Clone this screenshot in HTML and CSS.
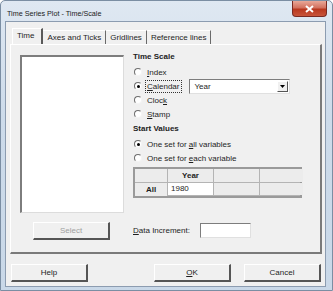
FILE: index.html
```html
<!DOCTYPE html>
<html lang="en">
<head>
    <meta charset="UTF-8">
    <title>Time Series Plot - Time/Scale</title>
    <link rel="stylesheet" href="styles.css">
</head>
<body>
    <div class="window">
        <div class="titlebar">
            <span class="title">Time Series Plot - Time/Scale</span>
            <span class="close-btn">
                <svg width="9" height="8" viewBox="0 0 9 8"><path d="M1 1 L8 7 M8 1 L1 7" stroke="#fff" stroke-width="2"/></svg>
            </span>
        </div>

        <div class="client">
            <div class="tabs">
                <div class="tab active">Time</div>
                <div class="tab">Axes and Ticks</div>
                <div class="tab">Gridlines</div>
                <div class="tab">Reference lines</div>
            </div>

            <div class="panel">
                <div class="left-col">
                    <div class="listbox"></div>
                    <div class="btn disabled select-btn">Select</div>
                </div>

                <div class="right-col">
                    <div class="group-label">Time Scale</div>
                    <div class="radio-row"><span class="radio"></span><span><u>I</u>ndex</span></div>
                    <div class="radio-row">
                        <span class="radio checked"></span>
                        <span class="focused"><u>C</u>alendar</span>
                        <div class="combo">
                            <span class="combo-text">Year</span>
                            <span class="combo-arrow">
                                <svg width="5" height="3" viewBox="0 0 5 3"><path d="M0 0 H5 L2.5 3 Z" fill="#000"/></svg>
                            </span>
                        </div>
                    </div>
                    <div class="radio-row"><span class="radio"></span><span>Cloc<u>k</u></span></div>
                    <div class="radio-row"><span class="radio"></span><span><u>S</u>tamp</span></div>

                    <div class="group-label second">Start Values</div>
                    <div class="radio-row"><span class="radio checked"></span><span>One set for <u>a</u>ll variables</span></div>
                    <div class="radio-row"><span class="radio"></span><span>One set for <u>e</u>ach variable</span></div>

                    <div class="grid">
                        <div class="cell head"></div>
                        <div class="cell head bold center">Year</div>
                        <div class="cell head"></div>
                        <div class="cell head"></div>
                        <div class="cell head bold center">All</div>
                        <div class="cell white">1980</div>
                        <div class="cell"></div>
                        <div class="cell"></div>
                    </div>

                    <div class="increment-row">
                        <span><u>D</u>ata Increment:</span>
                        <div class="textbox"></div>
                    </div>
                </div>
            </div>

            <div class="buttons">
                <div class="btn">Help</div>
                <div class="btn-pair">
                    <div class="btn"><u>O</u>K</div>
                    <div class="btn">Cancel</div>
                </div>
            </div>
        </div>
    </div>
</body>
</html>
```

FILE: styles.css
```css
* {
    margin: 0;
    padding: 0;
    box-sizing: border-box;
}

body {
    font-family: "Liberation Sans", Arial, sans-serif;
    font-size: 8px;
    color: #1e1e1e;
    background: #fff;
}

.window {
    width: 333px;
    height: 291px;
    background: linear-gradient(#dfe8f2, #cddbea 40%, #c9d8e8);
    border: 1px solid #7b8ea3;
    border-radius: 5px 5px 0 0;
    padding: 0 6px 3px 4px;
    display: flex;
    flex-direction: column;
}

.titlebar {
    height: 20px;
    display: flex;
    align-items: flex-start;
    flex-shrink: 0;
}

.title {
    font-size: 7.2px;
    margin: 8px 0 0 2px;
    color: #1a1a1a;
}

.close-btn {
    margin-left: auto;
    margin-right: -1px;
    width: 35px;
    height: 16px;
    border: 1px solid #7a2a22;
    border-top: none;
    border-radius: 0 0 4px 4px;
    background: linear-gradient(#e9a898, #d2715f 45%, #b9381f 55%, #c8553b);
    display: flex;
    align-items: center;
    justify-content: center;
}

.client {
    flex: 1;
    background: #f0f0f0;
    border: 1px solid #8c9cb0;
    display: flex;
    flex-direction: column;
}

/* tabs */
.tabs {
    display: flex;
    margin: 6px 0 0 6px;
    height: 16px;
    align-items: flex-end;
}

.tab {
    height: 14px;
    line-height: 13px;
    padding: 0 4px;
    border-right: 1px solid #6a6a6a;
    border-top: 1px solid #fff;
}

.tab.active {
    height: 16px;
    line-height: 14px;
    padding: 0 7px 0 4px;
    border-left: 1px solid #fff;
    border-right: 2px solid #5a5a5a;
    background: #f0f0f0;
}

.panel {
    margin-left: 4px;
    width: 312px;
    height: 210px;
    border-top: 1px solid #fff;
    border-left: 1px solid #fff;
    border-right: 2px solid #7a7a7a;
    border-bottom: 2px solid #7a7a7a;
    display: flex;
    padding: 10px 0 0 9px;
}

.left-col {
    width: 113px;
    display: flex;
    flex-direction: column;
}

.listbox {
    width: 104px;
    height: 158px;
    background: #fff;
    border-top: 2px solid #7d7d7d;
    border-left: 2px solid #7d7d7d;
    border-right: 1px solid #dcdcdc;
    border-bottom: 1px solid #dcdcdc;
}

.btn {
    width: 77px;
    height: 18px;
    display: flex;
    align-items: center;
    justify-content: center;
    background: #f0f0f0;
    border-top: 1px solid #fff;
    border-left: 1px solid #fff;
    border-right: 2px solid #555;
    border-bottom: 2px solid #555;
}

.btn.disabled {
    color: #a0a0a0;
}

.select-btn {
    margin: 9px 0 0 13px;
}

/* right column */
.right-col {
    display: flex;
    flex-direction: column;
}

.group-label {
    height: 14px;
    line-height: 14px;
    font-weight: bold;
    color: #222;
    margin-top: -5px;
    margin-bottom: 1px;
}

.group-label.second {
    margin-top: 1px;
}

.radio-row {
    height: 14px;
    display: flex;
    align-items: center;
}

.radio {
    width: 8px;
    height: 8px;
    border-radius: 50%;
    background: #fff;
    border: 1px solid;
    border-color: #6d6d6d #f4f4f4 #f4f4f4 #6d6d6d;
    margin: 0 5px 0 1px;
    display: flex;
    align-items: center;
    justify-content: center;
}

.radio.checked::after {
    content: '';
    width: 3px;
    height: 3px;
    border-radius: 50%;
    background: #000;
}

.focused {
    outline: 1px dotted #333;
    outline-offset: 1px;
    padding-right: 1px;
}

.combo {
    margin-left: 9px;
    width: 101px;
    height: 15px;
    background: #fff;
    border-top: 1px solid #7d7d7d;
    border-left: 1px solid #7d7d7d;
    border-right: 1px solid #e0e0e0;
    border-bottom: 1px solid #e0e0e0;
    display: flex;
    align-items: center;
    padding: 1px;
}

.combo-text {
    flex: 1;
    padding-left: 3px;
}

.combo-arrow {
    width: 11px;
    height: 11px;
    background: #f0f0f0;
    border-top: 1px solid #fff;
    border-left: 1px solid #fff;
    border-right: 1px solid #555;
    border-bottom: 1px solid #555;
    display: flex;
    align-items: center;
    justify-content: center;
}

/* start values table */
.grid {
    margin-top: 2px;
    width: 169px;
    display: grid;
    grid-template-columns: 32px 45px 45px 43px;
    border: 2px solid #9a9a9a;
    background: #b4b4b4;
    gap: 1px;
}

.cell {
    height: 12px;
    line-height: 12px;
    background: #ececec;
    padding-left: 3px;
}

.cell.head {
    height: 13px;
    line-height: 13px;
}

.cell.white {
    background: #fff;
}

.bold {
    font-weight: bold;
}

.center {
    text-align: center;
    padding-left: 0;
}

.increment-row {
    margin-top: 25px;
    display: flex;
    align-items: center;
}

.textbox {
    margin-left: 10px;
    width: 51px;
    height: 15px;
    background: #fff;
    border-top: 1px solid #7d7d7d;
    border-left: 1px solid #7d7d7d;
    border-right: 1px solid #e0e0e0;
    border-bottom: 1px solid #e0e0e0;
}

/* bottom buttons */
.buttons {
    display: flex;
    margin: 10px 0 0 5px;
}

.btn-pair {
    margin-left: auto;
    margin-right: 4px;
    display: flex;
    gap: 13px;
}
```
